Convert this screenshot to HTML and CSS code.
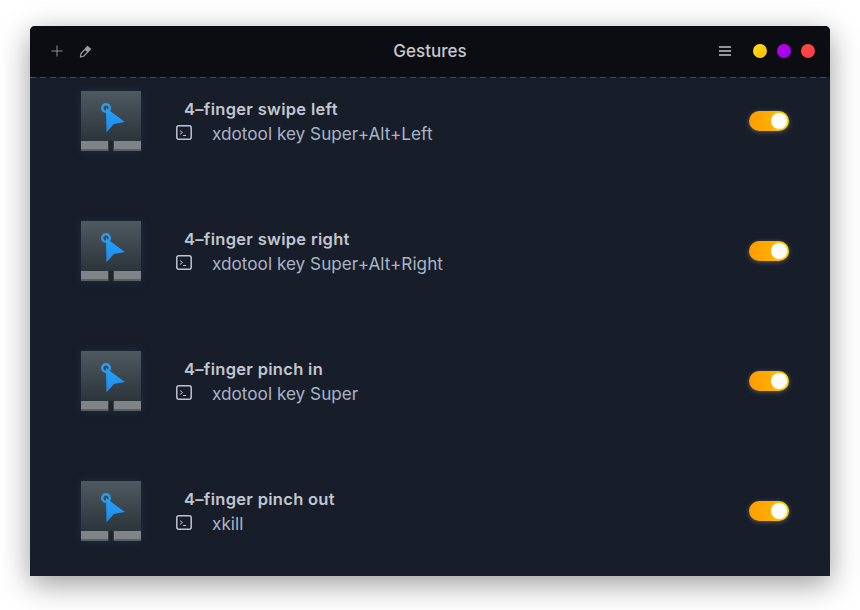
FILE: index.html
```html
<!DOCTYPE html>
<html lang="en">
  <head>
    <meta charset="utf-8" />
    <title>Gestures</title>
    <link rel="stylesheet" href="styles.css">
  </head>

  <body>
    <svg class="defs" width="0" height="0">
      <defs>
        <linearGradient id="pad-bg" x1="0" y1="0" x2="0" y2="1">
          <stop offset="0" stop-color="#4f5961" />
          <stop offset="1" stop-color="#252d33" />
        </linearGradient>
        <linearGradient id="arrow-bg" x1="0" y1="0" x2="0" y2="1">
          <stop offset="0" stop-color="#26a2f6" />
          <stop offset="1" stop-color="#1c8bf0" />
        </linearGradient>
        <g id="pad">
          <rect width="60" height="60" fill="url(#pad-bg)" />
          <rect x="0" y="50" width="27.5" height="10" fill="#7f8488" />
          <rect x="32.5" y="50" width="27.5" height="10" fill="#7f8488" />
          <rect x="0" y="58" width="27.5" height="2" fill="#5a6066" />
          <rect x="32.5" y="58" width="27.5" height="2" fill="#5a6066" />
          <rect x="27.5" y="50" width="5" height="10" fill="#1c242c" />
          <circle cx="25" cy="17" r="3.800" fill="none" stroke="#2a9cf0" stroke-width="2.500" />
          <path d="M25.500 17.500 L44.500 31 L33 33.500 L26 42 Z" fill="#1c242c" opacity="0.35" />
          <path d="M25 17 L44 31 L33 33 L25.500 41.500 Z" fill="url(#arrow-bg)" />
        </g>
        <g id="term">
          <rect x="0.8" y="0.8" width="14.4" height="13.4" rx="2" fill="none" stroke="#bcc5d4" stroke-width="1.500" />
          <path d="M4 5.500 L6.500 7.500 L4 9.500 M7 10.500 H10" fill="none" stroke="#bcc5d4" stroke-width="1" />
        </g>
      </defs>
    </svg>

    <div class="window">
      <div class="titlebar">
        <div class="tools">
          <svg width="12" height="12" viewBox="0 0 12 12">
            <path d="M6 0.500 V11.500 M0.500 6 H11.500" stroke="#8d8f93" stroke-width="1" fill="none" />
          </svg>
          <svg width="13" height="13" viewBox="0 0 13 13">
            <path d="M8.500 1.500 L11.500 4 L5 11 L1.500 12 L2 8.500 Z" fill="none" stroke="#9a9c9f" stroke-width="1.200" />
            <path d="M8.500 1.500 L11.500 4 L8.500 7.300 L5.500 4.800 Z" fill="#9a9c9f" />
          </svg>
        </div>
        <div class="title">Gestures</div>
        <div class="actions">
          <div class="menu"><span></span><span></span><span></span></div>
          <div class="dot dot-yellow"></div>
          <div class="dot dot-purple"></div>
          <div class="dot dot-red"></div>
        </div>
      </div>

      <div class="list">
        <div class="row">
          <svg class="pad" width="60" height="60"><use href="#pad" /></svg>
          <div class="info">
            <div class="name">4–finger swipe left</div>
            <div class="command">
              <svg width="16" height="15"><use href="#term" /></svg>
              <span>xdotool key Super+Alt+Left</span>
            </div>
          </div>
          <div class="toggle"><div class="knob"></div></div>
        </div>
        <div class="row">
          <svg class="pad" width="60" height="60"><use href="#pad" /></svg>
          <div class="info">
            <div class="name">4–finger swipe right</div>
            <div class="command">
              <svg width="16" height="15"><use href="#term" /></svg>
              <span>xdotool key Super+Alt+Right</span>
            </div>
          </div>
          <div class="toggle"><div class="knob"></div></div>
        </div>
        <div class="row">
          <svg class="pad" width="60" height="60"><use href="#pad" /></svg>
          <div class="info">
            <div class="name">4–finger pinch in</div>
            <div class="command">
              <svg width="16" height="15"><use href="#term" /></svg>
              <span>xdotool key Super</span>
            </div>
          </div>
          <div class="toggle"><div class="knob"></div></div>
        </div>
        <div class="row">
          <svg class="pad" width="60" height="60"><use href="#pad" /></svg>
          <div class="info">
            <div class="name">4–finger pinch out</div>
            <div class="command">
              <svg width="16" height="15"><use href="#term" /></svg>
              <span>xkill</span>
            </div>
          </div>
          <div class="toggle"><div class="knob"></div></div>
        </div>
      </div>
    </div>
  </body>
</html>
```

FILE: styles.css
```css
html, body {
  height: 100%;
}

body {
  margin: 0;
  padding: 26px 30px 0;
  box-sizing: border-box;
  background-color: #ffffff;
  font-family: "Inter", "Noto Sans", sans-serif;
  overflow: hidden;
}

.defs {
  display: block;
  height: 0;
}

.window {
  width: 800px;
  height: 550px;
  background-color: #181d2a;
  border-radius: 5px 5px 0 0;
  box-shadow: 0 8px 30px rgba(0, 0, 0, 0.4);
  overflow: hidden;
}

.titlebar {
  height: 52px;
  box-sizing: border-box;
  display: flex;
  align-items: center;
  justify-content: space-between;
  background-color: #0c0d12;
  background-image: linear-gradient(90deg, #454b58 6px, #181d2a 6px);
  background-size: 10px 1px;
  background-position: left bottom;
  background-repeat: repeat-x;
  padding: 0 15px 2px 21px;
  position: relative;
}

.tools {
  display: flex;
  align-items: center;
  gap: 16px;
}

.title {
  position: absolute;
  left: 0;
  right: 0;
  text-align: center;
  color: #c6c8cc;
  font-size: 17px;
  font-weight: 500;
  pointer-events: none;
}

.actions {
  display: flex;
  align-items: center;
  gap: 10px;
}

.menu {
  display: flex;
  flex-direction: column;
  gap: 2px;
  width: 12px;
  margin-right: 12px;
}

.menu span {
  display: block;
  height: 2px;
  background-color: #939496;
}

.dot {
  width: 14px;
  height: 14px;
  border-radius: 50%;
}

.dot-yellow {
  background: linear-gradient(135deg, #ffe20d, #f9b90f);
}

.dot-purple {
  background: linear-gradient(135deg, #bf00e6, #9b00f5);
}

.dot-red {
  background: linear-gradient(135deg, #ff4d3d, #f83a4c);
}

.list {
  padding-top: 13px;
}

.row {
  height: 130px;
  display: flex;
  align-items: flex-start;
  padding: 0 41px 0 51px;
}

.pad {
  display: block;
  flex: none;
  box-shadow: 0 0 8px rgba(40, 70, 85, 0.45);
}

.info {
  flex: 1;
  margin-left: 35px;
  padding-top: 8px;
}

.name {
  padding-left: 8px;
  color: #c2c6ce;
  font-size: 16.500px;
  font-weight: 600;
  letter-spacing: 0.3px;
  line-height: 20px;
}

.command {
  display: flex;
  align-items: flex-start;
  gap: 20px;
  margin-top: 4px;
  color: #a9b4c6;
  font-size: 17.200px;
  line-height: 22px;
}

.command svg {
  display: block;
  flex: none;
  margin-top: 2px;
}

.toggle {
  width: 40px;
  height: 20px;
  margin-top: 20px;
  box-sizing: border-box;
  padding: 2px;
  display: flex;
  justify-content: flex-end;
  border-radius: 10px;
  background: linear-gradient(90deg, #ff9d00, #ffae00 55%, #ffdc00);
  box-shadow: 0 1px 5px rgba(255, 255, 255, 0.28);
}

.knob {
  width: 16px;
  height: 16px;
  border-radius: 50%;
  background-color: #ffffff;
}
```
